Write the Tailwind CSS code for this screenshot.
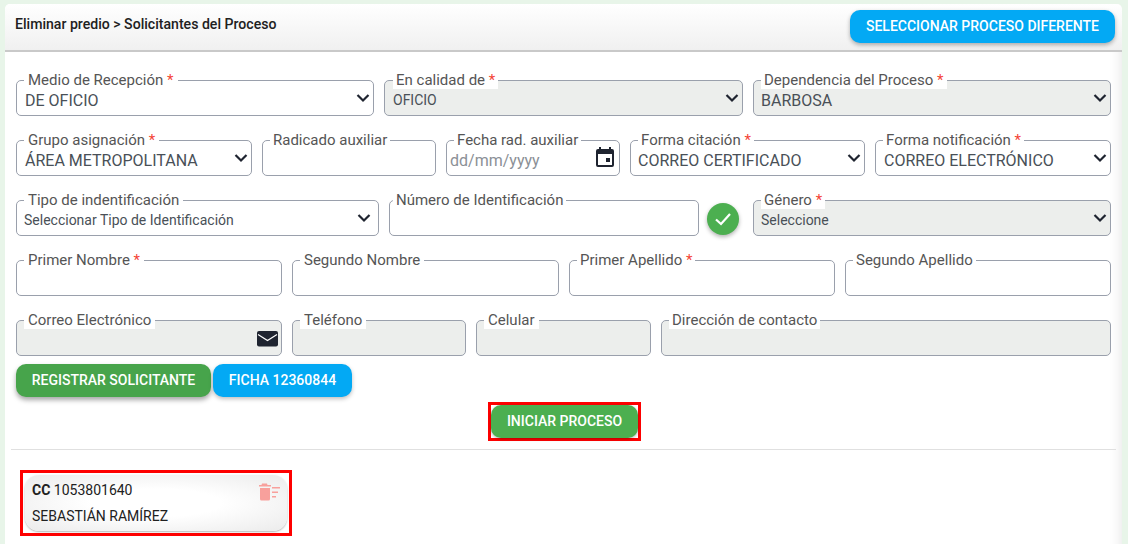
<!DOCTYPE html>
<html lang="es">
<head>
<meta charset="utf-8">
<script src="https://cdn.jsdelivr.net/npm/@tailwindcss/browser@4"></script>
</head>
<body class="m-0 h-[544px] w-[1128px] overflow-hidden bg-[#e8f5e9] font-['Roboto',sans-serif]">
<div class="ml-[5px] mt-[4px] h-[560px] w-[1117px] rounded-[5px] bg-white shadow-[inset_-14px_0_14px_-14px_rgba(0,0,0,0.12)]">
  <header class="flex h-[48px] items-start justify-between rounded-t-[5px] border-b-[2px] border-[#c9c9c9] bg-gradient-to-b from-white to-[#f0f0f0] pl-[10px] pr-[7px]">
    <h1 class="mt-[12px] text-[14.1px] leading-[16px] font-medium text-[#212121]">Eliminar predio &gt; Solicitantes del Proceso</h1>
    <button class="mt-[6px] h-[33px] w-[265px] rounded-[10px] bg-[#03a9f4] text-[14px] font-medium text-white shadow-[0_2px_4px_rgba(0,0,0,0.3)]">SELECCIONAR PROCESO DIFERENTE</button>
  </header>
  <main class="px-[11px]">
    <div class="mt-[28px] grid grid-cols-[358px_359px_358px] gap-x-[10px]">
      <div class="relative h-[36px] rounded-[5px] border border-[#9aa0ac] bg-white">
        <span class="absolute -top-[9px] left-[7px] bg-white px-[4px] text-[15px] leading-[17px] text-[#555]">Medio de Recepción <span class="text-[#f44336]">*</span></span>
        <span class="absolute left-[8px] top-[10px] text-[16px] leading-[19px] text-[#495057]">DE OFICIO</span>
        <svg class="absolute right-[3px] top-[12px]" width="14" height="10" viewBox="0 0 14 10" fill="none" stroke="#1f2430" stroke-width="2.2"><path d="M1.5 2l5.5 5.5L12.5 2"/></svg>
      </div>
      <div class="relative h-[36px] rounded-[5px] border border-[#9aa0ac] bg-[#eceeec]">
        <span class="absolute -top-[9px] left-[8px] bg-white px-[3px] text-[15px] leading-[17px] text-[#555]">En calidad de <span class="text-[#f44336]">*</span></span>
        <span class="absolute left-[8px] top-[11px] text-[14px] leading-[16px] text-[#495057]">OFICIO</span>
        <svg class="absolute right-[3px] top-[12px]" width="14" height="10" viewBox="0 0 14 10" fill="none" stroke="#1f2430" stroke-width="2.2"><path d="M1.5 2l5.5 5.5L12.5 2"/></svg>
      </div>
      <div class="relative h-[36px] rounded-[5px] border border-[#9aa0ac] bg-[#eceeec]">
        <span class="absolute -top-[9px] left-[7px] bg-white px-[3px] text-[15px] leading-[17px] text-[#555]">Dependencia del Proceso <span class="text-[#f44336]">*</span></span>
        <span class="absolute left-[7px] top-[10px] text-[16px] leading-[19px] text-[#495057]">BARBOSA</span>
        <svg class="absolute right-[3px] top-[12px]" width="14" height="10" viewBox="0 0 14 10" fill="none" stroke="#1f2430" stroke-width="2.2"><path d="M1.5 2l5.5 5.5L12.5 2"/></svg>
      </div>
    </div>

    <div class="mt-[24px] grid grid-cols-[236px_174px_174px_235px_236px] gap-x-[10px]">
      <div class="relative h-[36px] rounded-[5px] border border-[#9aa0ac] bg-white">
        <span class="absolute -top-[9px] left-[7px] bg-white px-[4px] text-[15px] leading-[17px] text-[#555]">Grupo asignación <span class="text-[#f44336]">*</span></span>
        <span class="absolute left-[8px] top-[10px] text-[16px] leading-[19px] text-[#495057]">ÁREA METROPOLITANA</span>
        <svg class="absolute right-[3px] top-[12px]" width="14" height="10" viewBox="0 0 14 10" fill="none" stroke="#1f2430" stroke-width="2.2"><path d="M1.5 2l5.5 5.5L12.5 2"/></svg>
      </div>
      <div class="relative h-[36px] rounded-[5px] border border-[#9aa0ac] bg-white">
        <span class="absolute -top-[9px] left-[7px] bg-white px-[3px] text-[15px] leading-[17px] text-[#555]">Radicado auxiliar</span>
      </div>
      <div class="relative h-[36px] rounded-[5px] border border-[#9aa0ac] bg-white">
        <span class="absolute -top-[9px] left-[7px] bg-white px-[3px] text-[15px] leading-[17px] text-[#555]">Fecha rad. auxiliar</span>
        <span class="absolute left-[3px] top-[10px] text-[16px] leading-[19px] text-[#8b9096]">dd/mm/yyyy</span>
        <svg class="absolute right-[2px] top-[4px]" width="24" height="24" viewBox="0 0 24 24" fill="#1f2430"><path d="M19 4h-1V2h-2v2H8V2H6v2H5a2 2 0 0 0-2 2v14a2 2 0 0 0 2 2h14a2 2 0 0 0 2-2V6a2 2 0 0 0-2-2zm0 16H5V9h14v11zm-6-7h4v4h-4z"/></svg>
      </div>
      <div class="relative h-[36px] rounded-[5px] border border-[#9aa0ac] bg-white">
        <span class="absolute -top-[9px] left-[7px] bg-white px-[3px] text-[15px] leading-[17px] text-[#555]">Forma citación <span class="text-[#f44336]">*</span></span>
        <span class="absolute left-[7px] top-[10px] text-[16px] leading-[19px] text-[#495057]">CORREO CERTIFICADO</span>
        <svg class="absolute right-[3px] top-[12px]" width="14" height="10" viewBox="0 0 14 10" fill="none" stroke="#1f2430" stroke-width="2.2"><path d="M1.5 2l5.5 5.5L12.5 2"/></svg>
      </div>
      <div class="relative h-[36px] rounded-[5px] border border-[#9aa0ac] bg-white">
        <span class="absolute -top-[9px] left-[7px] bg-white px-[3px] text-[15px] leading-[17px] text-[#555]">Forma notificación <span class="text-[#f44336]">*</span></span>
        <span class="absolute left-[8px] top-[10px] text-[16px] leading-[19px] text-[#495057]">CORREO ELECTRÓNICO</span>
        <svg class="absolute right-[3px] top-[12px]" width="14" height="10" viewBox="0 0 14 10" fill="none" stroke="#1f2430" stroke-width="2.2"><path d="M1.5 2l5.5 5.5L12.5 2"/></svg>
      </div>
    </div>

    <div class="mt-[24px] flex">
      <div class="relative h-[36px] w-[363px] shrink-0 rounded-[5px] border border-[#9aa0ac] bg-white">
        <span class="absolute -top-[9px] left-[7px] bg-white px-[4px] text-[15px] leading-[17px] text-[#555]">Tipo de indentificación</span>
        <span class="absolute left-[7px] top-[11px] text-[14px] leading-[16px] text-[#495057]">Seleccionar Tipo de Identificación</span>
        <svg class="absolute right-[7px] top-[12px]" width="14" height="10" viewBox="0 0 14 10" fill="none" stroke="#1f2430" stroke-width="2.2"><path d="M1.5 2l5.5 5.5L12.5 2"/></svg>
      </div>
      <div class="relative ml-[10px] h-[36px] w-[310px] shrink-0 rounded-[5px] border border-[#9aa0ac] bg-white">
        <span class="absolute -top-[9px] left-[3px] bg-white px-[3px] text-[15px] leading-[17px] text-[#555]">Número de Identificación</span>
      </div>
      <div class="ml-[8px] mt-[3px] flex h-[32px] w-[32px] shrink-0 items-center justify-center rounded-full bg-[#4caf50] shadow-[0_2px_4px_rgba(0,0,0,0.3)]">
        <svg width="18" height="14" viewBox="0 0 18 14" fill="none" stroke="#fff" stroke-width="2.2"><path d="M2 7.5l5 4.5 9-10"/></svg>
      </div>
      <div class="relative ml-[14px] h-[36px] w-[358px] shrink-0 rounded-[5px] border border-[#9aa0ac] bg-[#eceeec]">
        <span class="absolute -top-[9px] left-[7px] bg-white px-[3px] text-[15px] leading-[17px] text-[#555]">Género <span class="text-[#f44336]">*</span></span>
        <span class="absolute left-[7px] top-[11px] text-[14px] leading-[16px] text-[#495057]">Seleccione</span>
        <svg class="absolute right-[3px] top-[12px]" width="14" height="10" viewBox="0 0 14 10" fill="none" stroke="#1f2430" stroke-width="2.2"><path d="M1.5 2l5.5 5.5L12.5 2"/></svg>
      </div>
    </div>

    <div class="mt-[24px] grid grid-cols-[266px_267px_266px_266px] gap-x-[10px]">
      <div class="relative h-[36px] rounded-[5px] border border-[#9aa0ac] bg-white"><span class="absolute -top-[9px] left-[7px] bg-white px-[4px] text-[15px] leading-[17px] text-[#555]">Primer Nombre <span class="text-[#f44336]">*</span></span></div>
      <div class="relative h-[36px] rounded-[5px] border border-[#9aa0ac] bg-white"><span class="absolute -top-[9px] left-[7px] bg-white px-[4px] text-[15px] leading-[17px] text-[#555]">Segundo Nombre</span></div>
      <div class="relative h-[36px] rounded-[5px] border border-[#9aa0ac] bg-white"><span class="absolute -top-[9px] left-[7px] bg-white px-[3px] text-[15px] leading-[17px] text-[#555]">Primer Apellido <span class="text-[#f44336]">*</span></span></div>
      <div class="relative h-[36px] rounded-[5px] border border-[#9aa0ac] bg-white"><span class="absolute -top-[9px] left-[7px] bg-white px-[3px] text-[15px] leading-[17px] text-[#555]">Segundo Apellido</span></div>
    </div>

    <div class="mt-[24px] grid grid-cols-[266px_174px_175px_450px] gap-x-[10px]">
      <div class="relative h-[36px] rounded-[5px] border border-[#9aa0ac] bg-[#eceeec]">
        <span class="absolute -top-[9px] left-[7px] bg-white px-[4px] text-[15px] leading-[17px] text-[#555]">Correo Electrónico</span>
        <svg class="absolute right-[3px] top-[10px]" width="21" height="16" viewBox="0 0 21 16"><rect width="21" height="15.5" rx="2" fill="#1f2430"/><path d="M1 3.5l9.5 6 9.5-6" fill="none" stroke="#fff" stroke-width="1.2"/></svg>
      </div>
      <div class="relative h-[36px] rounded-[5px] border border-[#9aa0ac] bg-[#eceeec]"><span class="absolute -top-[9px] left-[7px] bg-white px-[4px] text-[15px] leading-[17px] text-[#555]">Teléfono</span></div>
      <div class="relative h-[36px] rounded-[5px] border border-[#9aa0ac] bg-[#eceeec]"><span class="absolute -top-[9px] left-[7px] bg-white px-[4px] text-[15px] leading-[17px] text-[#555]">Celular</span></div>
      <div class="relative h-[36px] rounded-[5px] border border-[#9aa0ac] bg-[#eceeec]"><span class="absolute -top-[9px] left-[7px] bg-white px-[3px] text-[15px] leading-[17px] text-[#555]">Dirección de contacto</span></div>
    </div>

    <div class="mt-[8px] flex gap-[2px]">
      <button class="h-[33px] w-[195px] rounded-[10px] bg-[#47a44b] text-[14px] font-medium text-white shadow-[0_3px_5px_rgba(0,0,0,0.35)]">REGISTRAR SOLICITANTE</button>
      <button class="h-[33px] w-[139px] rounded-[10px] bg-[#03a9f4] text-[14px] font-medium text-white shadow-[0_2px_4px_rgba(0,0,0,0.25)]">FICHA 12360844</button>
    </div>

    <div class="mt-[5px] flex justify-center pl-[2px]">
      <div class="border-[3px] border-[#fe0000]">
        <button class="block h-[33px] w-[147px] rounded-[10px] bg-[#4caf50] text-[14px] font-medium text-white shadow-[0_1px_3px_rgba(0,0,0,0.3)]">INICIAR PROCESO</button>
      </div>
    </div>
  </main>
  <div class="mx-[6px] mt-[8px] h-px w-[1105px] bg-[#e0e0e0]"></div>
  <div class="ml-[15px] mt-[20px] h-[66px] w-[272px] border-[3px] border-[#fe0000] p-[2px]">
    <div class="relative h-[56px] w-[262px] rounded-[14px] bg-[radial-gradient(ellipse_at_center,#ffffff_35%,#ebebeb_100%)] pl-[7px] shadow-[0_1px_2px_rgba(0,0,0,0.3)]">
      <p class="pt-[7px] text-[14px] leading-[16px] text-[#212121]"><b class="font-bold">CC</b> 1053801640</p>
      <p class="mt-[10px] text-[14px] leading-[16px] text-[#212121]">SEBASTIÁN RAMÍREZ</p>
      <svg class="absolute right-[7px] top-[8px]" width="21" height="18" viewBox="0 0 21 18" fill="#f8a09c"><path d="M3 0.5h5l.5 1.5H12v1.5H0V2h2.5zM1 5h10v11a1.5 1.5 0 0 1-1.5 1.5h-7A1.5 1.5 0 0 1 1 16zM13 4h8v1.5h-8zM13 8.5h6V10h-6zM13 13h4v1.5h-4z"/></svg>
    </div>
  </div>
</div>
</body>
</html>
